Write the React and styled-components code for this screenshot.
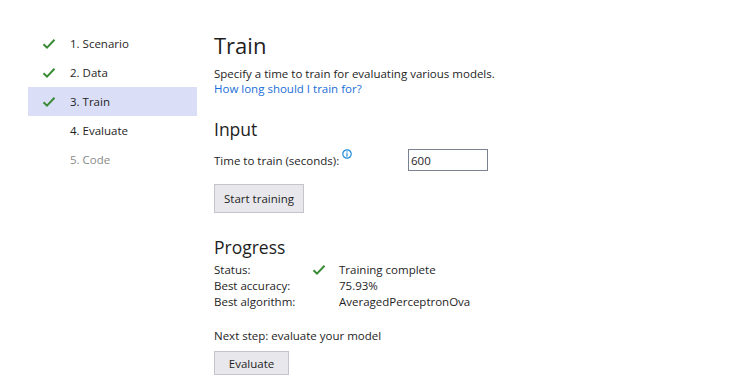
import React from "react";
import styled, { createGlobalStyle } from "styled-components";

const Global = createGlobalStyle`
  html, body { margin: 0; padding: 0; background: #ffffff; }
  body { font-family: "Segoe UI", "Open Sans", "Noto Sans", sans-serif; color: #1e1e1e; }
`;

const Page = styled.div`
  display: flex;
  align-items: flex-start;
  width: 735px;
  height: 386px;
  overflow: hidden;
`;

const Sidebar = styled.nav`
  display: flex;
  flex-direction: column;
  width: 169px;
  margin: 29px 0 0 28px;
`;

const Step = styled.div`
  display: flex;
  align-items: center;
  height: 29px;
  padding-left: 13px;
  background: ${(p) => (p.$active ? "#dadff7" : "transparent")};
  color: ${(p) => (p.$disabled ? "#8a8a8a" : "#1e1e1e")};
  font-size: 11.5px;
`;

const CheckSlot = styled.span`
  display: inline-flex;
  width: 16px;
  height: 16px;
  margin-right: 13px;
  align-items: center;
  justify-content: center;
`;

const Main = styled.main`
  display: flex;
  flex-direction: column;
  margin: 30px 0 0 17px;
`;

const Title = styled.h1`
  margin: 0 0 6px 0;
  font-size: 22px;
  font-weight: 400;
  line-height: 30px;
`;

const Text = styled.div`
  font-size: 11.5px;
  line-height: 15px;
  margin-top: ${(p) => p.$top || 0}px;
`;

const Link = styled.a`
  font-size: 11.5px;
  line-height: 15px;
  color: #1a6ed8;
  text-decoration: none;
`;

const Heading = styled.h2`
  margin: ${(p) => p.$top}px 0 0 0;
  font-size: 17.5px;
  font-weight: 400;
  line-height: 24px;
`;

const FieldRow = styled.div`
  display: flex;
  align-items: center;
  margin-top: 8px;
  height: 22px;
`;

const Label = styled.label`
  display: flex;
  align-items: flex-start;
  font-size: 11.5px;
  width: 194px;
`;

const Info = styled.span`
  display: inline-flex;
  margin-left: 3px;
  margin-top: -4px;
`;

const Input = styled.input`
  box-sizing: border-box;
  width: 80px;
  height: 22px;
  border: 1px solid #7a8290;
  padding: 0 2px;
  font-family: inherit;
  font-size: 11.5px;
  color: #1e1e1e;
  outline: none;
`;

const Button = styled.button`
  box-sizing: border-box;
  align-self: flex-start;
  min-width: 75px;
  height: ${(p) => p.$h || 29}px;
  padding: 0 9px;
  margin-top: ${(p) => p.$top}px;
  background: #e8e8ec;
  border: 1px solid #c4c4cc;
  font-family: inherit;
  font-size: 11.5px;
  color: #1e1e1e;
`;

const StatGrid = styled.div`
  display: grid;
  grid-template-columns: 98px 27px auto;
  font-size: 11.5px;
  line-height: 16px;
  margin-top: 3px;
`;

const StatCheck = styled.span`
  display: flex;
  align-items: center;
`;

const Check = () => (
  <svg width="14" height="12" viewBox="0 0 14 12">
    <path d="M1.5 6.2 L5 9.6 L12.5 1.8" fill="none" stroke="#388a34" strokeWidth="2" />
  </svg>
);

const InfoIcon = () => (
  <svg width="10" height="10" viewBox="0 0 10 10">
    <circle cx="5" cy="5" r="4.2" fill="none" stroke="#1e8bd6" strokeWidth="1.2" />
    <rect x="4.4" y="4.2" width="1.2" height="3.4" fill="#1e8bd6" />
    <rect x="4.4" y="2.3" width="1.2" height="1.2" fill="#1e8bd6" />
  </svg>
);

const steps = [
  { label: "1. Scenario", done: true },
  { label: "2. Data", done: true },
  { label: "3. Train", done: true, active: true },
  { label: "4. Evaluate" },
  { label: "5. Code", disabled: true },
];

export default function App() {
  return (
    <>
      <Global />
      <Page>
        <Sidebar>
          {steps.map((s) => (
            <Step key={s.label} $active={s.active} $disabled={s.disabled}>
              <CheckSlot>{s.done && <Check />}</CheckSlot>
              {s.label}
            </Step>
          ))}
        </Sidebar>
        <Main>
          <Title>Train</Title>
          <Text>Specify a time to train for evaluating various models.</Text>
          <Link href="#">How long should I train for?</Link>
          <Heading $top={21}>Input</Heading>
          <FieldRow>
            <Label>
              Time to train (seconds):
              <Info><InfoIcon /></Info>
            </Label>
            <Input defaultValue="600" />
          </FieldRow>
          <Button $top={13} $h={29}>Start training</Button>
          <Heading $top={22}>Progress</Heading>
          <StatGrid>
            <span>Status:</span>
            <StatCheck><Check /></StatCheck>
            <span>Training complete</span>
            <span>Best accuracy:</span>
            <span />
            <span>75.93%</span>
            <span>Best algorithm:</span>
            <span />
            <span>AveragedPerceptronOva</span>
          </StatGrid>
          <Text $top={18}>Next step: evaluate your model</Text>
          <Button $top={8} $h={24}>Evaluate</Button>
        </Main>
      </Page>
    </>
  );
}
